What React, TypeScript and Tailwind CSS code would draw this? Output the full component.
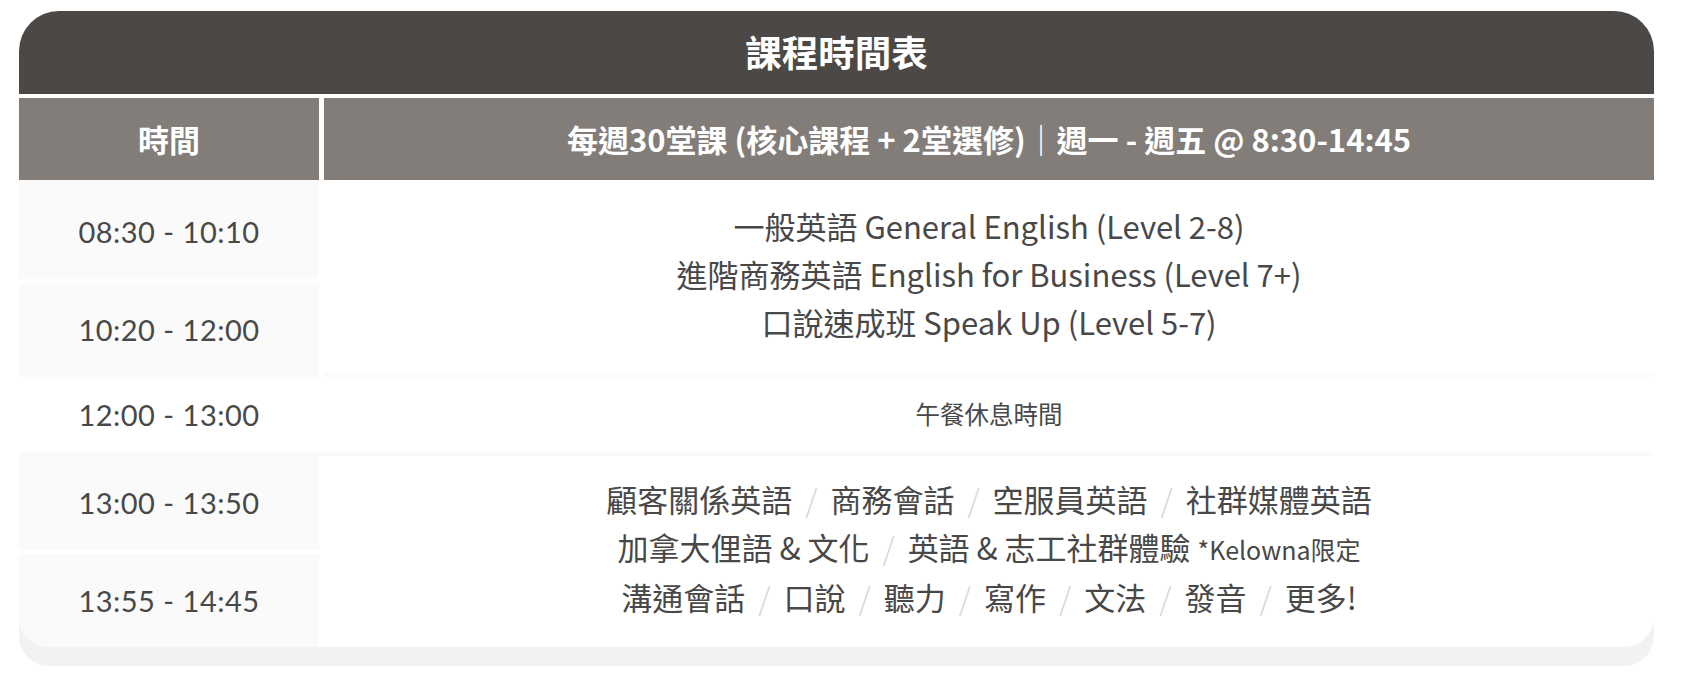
const cjk = "font-['Noto_Sans_CJK_TC','Noto_Sans',sans-serif]";
const timeFont = "font-['Lato','Noto_Sans',sans-serif] text-[29px] tracking-[0.5px]";

function Sep() {
  return <span className="mx-[13px] font-light text-[#d6d6d6]">/</span>;
}

function TimeCell({ label, className = "" }: { label: string; className?: string }) {
  return (
    <div
      className={`flex flex-1 items-center justify-center bg-[#fafafa] text-[#484848] ${timeFont} ${className}`}
    >
      {label}
    </div>
  );
}

export default function App() {
  return (
    <div className="min-h-screen bg-white pt-[11px]">
      <div
        className={`ml-[19px] w-[1635px] overflow-hidden rounded-t-[40px] rounded-b-[30px] bg-white shadow-[0_19px_0_#f1f3f2] ${cjk}`}
      >
        <div className="flex h-[83px] items-center justify-center bg-[#4c4845] text-[36.5px] font-bold text-white">
          課程時間表
        </div>

        <div className="mt-[4px] flex h-[82px] gap-[5px] text-[31px] font-bold text-white">
          <div className="flex w-[300px] items-center justify-center bg-[#827d79]">時間</div>
          <div className="flex flex-1 items-center justify-center bg-[#827d79]">
            每週30堂課 (核心課程 + 2堂選修)｜週一 - 週五 @ 8:30-14:45
          </div>
        </div>

        {/* morning block */}
        <div className="flex h-[197px] gap-[5px]">
          <div className="flex w-[300px] flex-col gap-[4px]">
            <TimeCell label="08:30 - 10:10" className="pt-[5px]" />
            <TimeCell label="10:20 - 12:00" />
          </div>
          <div className="flex flex-1 flex-col items-center justify-center border-b-4 border-[#fafafa] pb-[6px] text-[31px] leading-[48px] text-[#484848]">
            <p>一般英語 General English (Level 2-8)</p>
            <p>進階商務英語 English for Business (Level 7+)</p>
            <p>口說速成班 Speak Up (Level 5-7)</p>
          </div>
        </div>

        {/* lunch */}
        <div className="flex h-[75px] gap-[5px] text-[#484848]">
          <div className={`flex w-[300px] items-center justify-center ${timeFont}`}>
            12:00 - 13:00
          </div>
          <div className="flex flex-1 items-center justify-center text-[24.5px]">午餐休息時間</div>
        </div>

        {/* afternoon block */}
        <div className="flex h-[195px] gap-[5px] border-t-4 border-[#fafafa]">
          <div className="flex w-[300px] flex-col gap-[4px]">
            <TimeCell label="13:00 - 13:50" />
            <TimeCell label="13:55 - 14:45" />
          </div>
          <div className="flex flex-1 flex-col items-center justify-center pb-[8px] text-[31px] leading-[48px] text-[#484848]">
            <p>
              顧客關係英語
              <Sep />
              商務會話
              <Sep />
              空服員英語
              <Sep />
              社群媒體英語
            </p>
            <p>
              加拿大俚語 &amp; 文化
              <Sep />
              英語 &amp; 志工社群體驗 <span className="text-[25px]">*Kelowna限定</span>
            </p>
            <p>
              溝通會話
              <Sep />
              口說
              <Sep />
              聽力
              <Sep />
              寫作
              <Sep />
              文法
              <Sep />
              發音
              <Sep />
              更多!
            </p>
          </div>
        </div>
      </div>
    </div>
  );
}
